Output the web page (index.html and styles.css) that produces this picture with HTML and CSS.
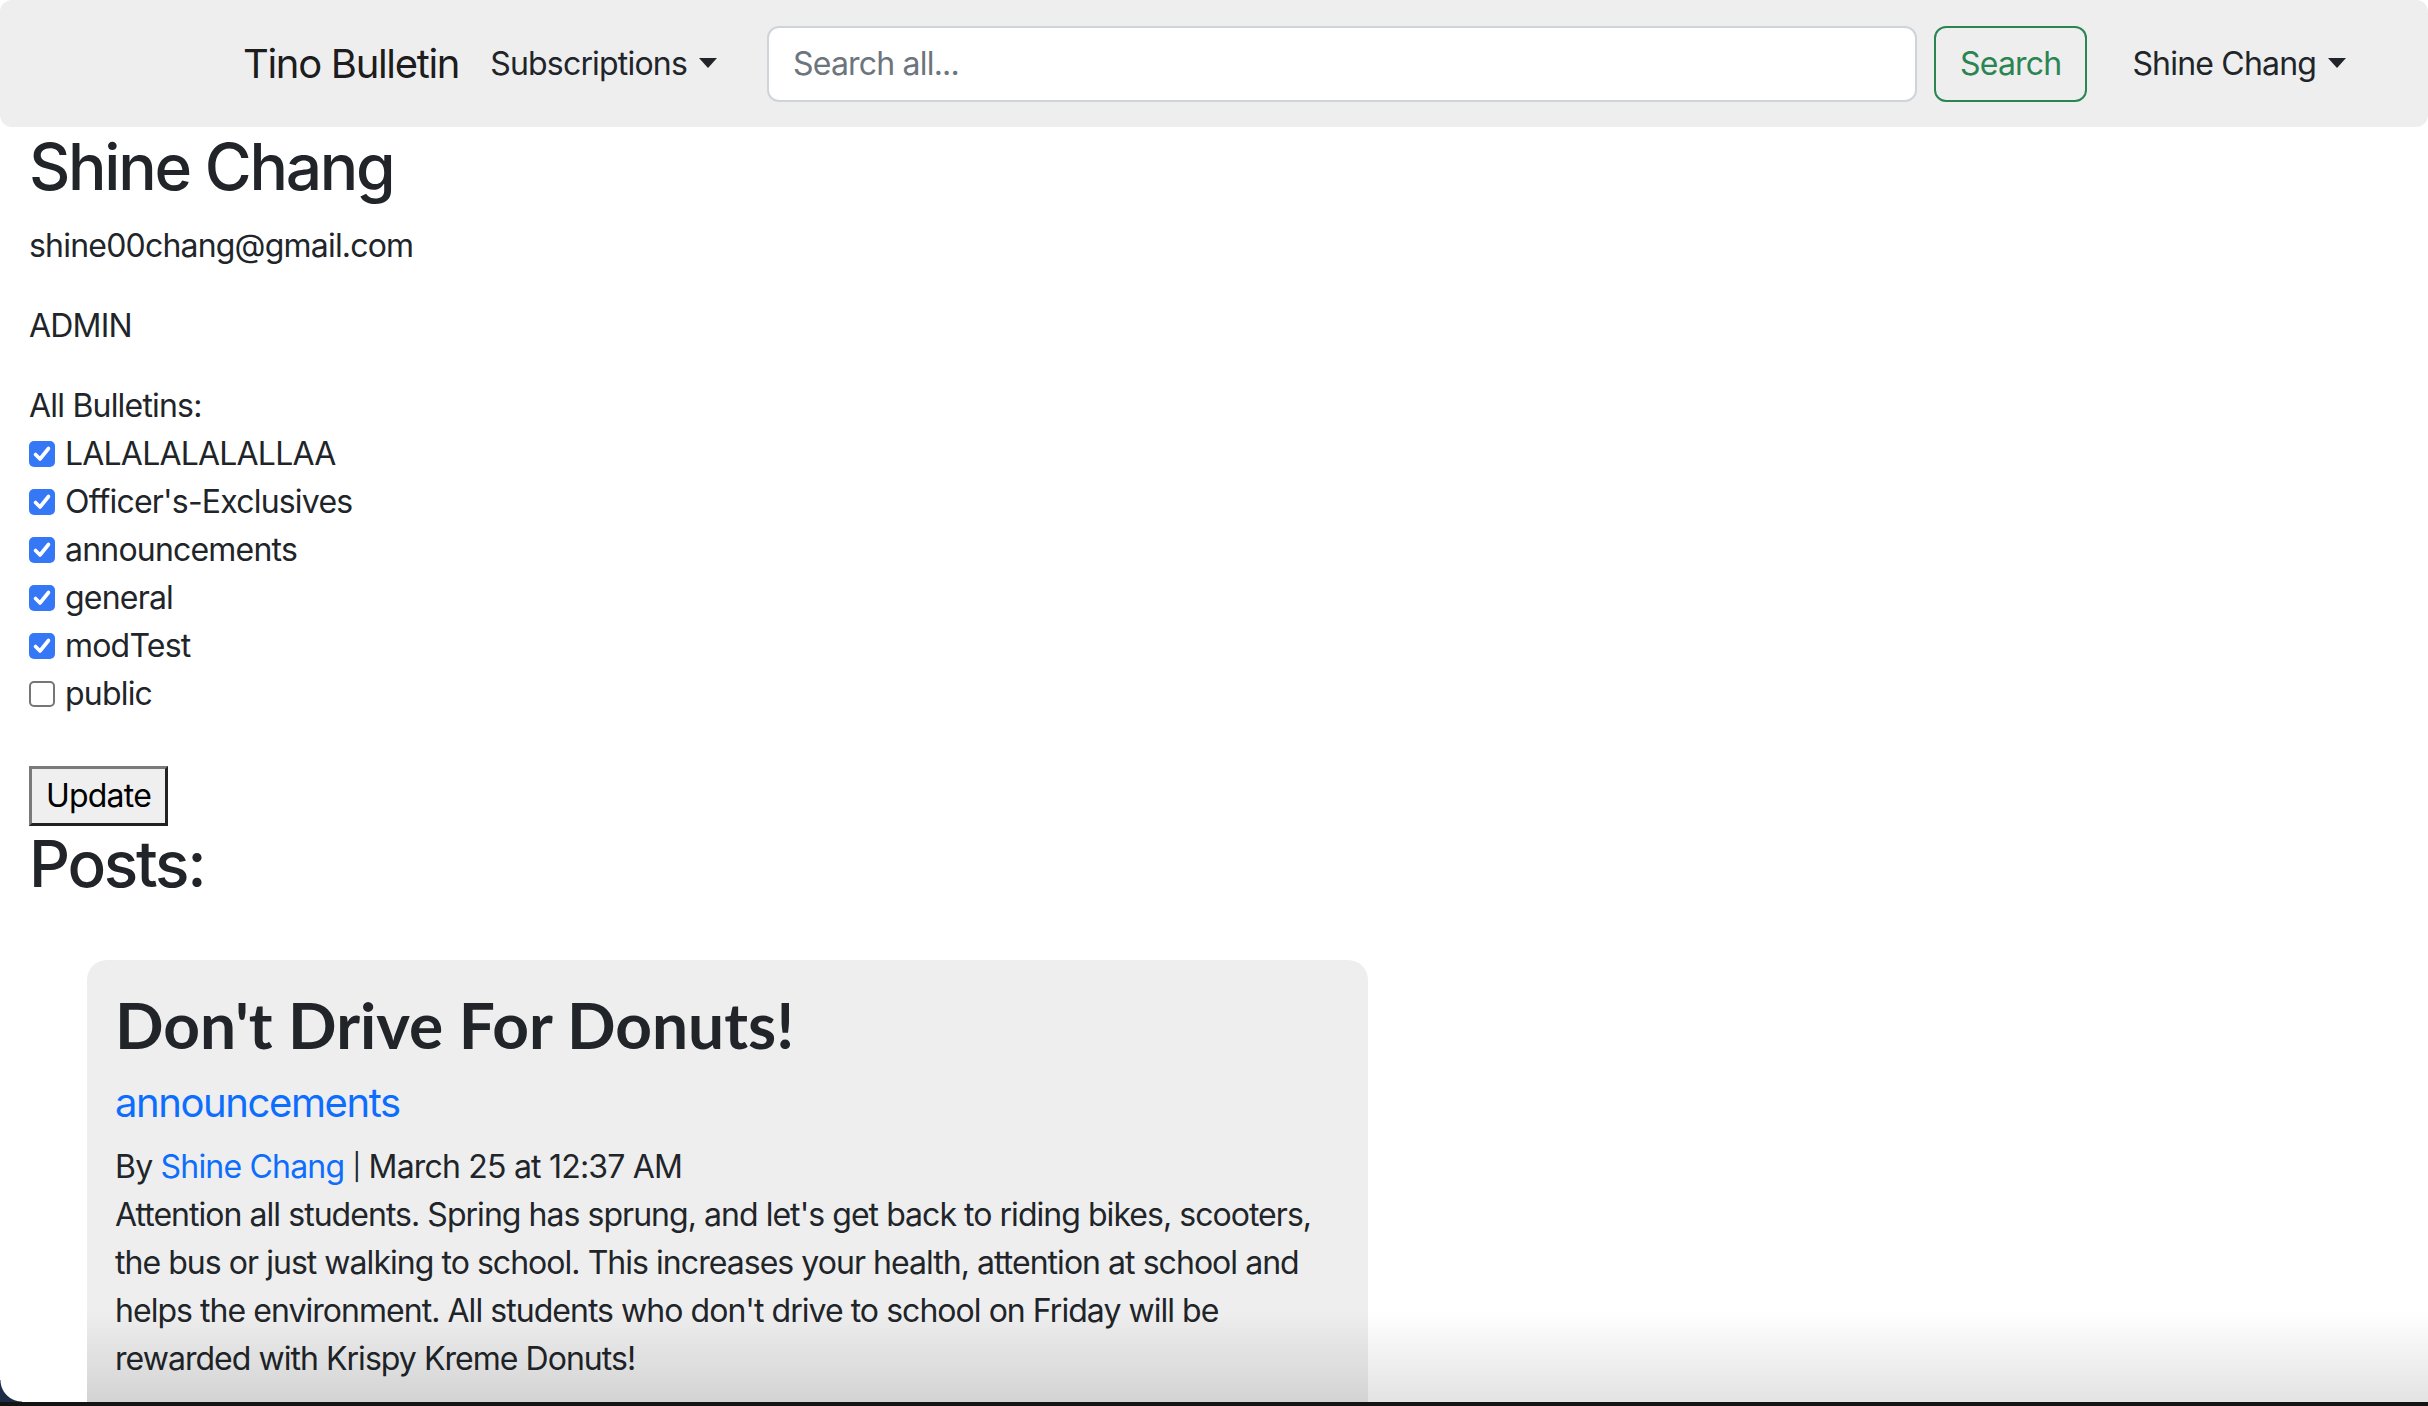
FILE: index.html
```html
<!DOCTYPE html>
<html lang="en">
<head>
<meta charset="utf-8">
<title>Tino Bulletin</title>
<link rel="stylesheet" href="styles.css">
</head>
<body>
<nav class="navbar">
  <div class="nav-left">
    <a class="brand" href="#">Tino Bulletin</a>
    <a class="nav-link dropdown-toggle" href="#">Subscriptions</a>
  </div>
  <form class="search">
    <input class="search-input" type="search" placeholder="Search all...">
    <button class="btn-search" type="button">Search</button>
  </form>
  <a class="nav-link dropdown-toggle user" href="#">Shine Chang</a>
</nav>
<main class="content">
  <h2 class="heading">Shine Chang</h2>
  <p class="para">shine00chang@gmail.com</p>
  <p class="para">ADMIN</p>
  <form class="subs">
    <div class="line">All Bulletins:</div>
    <label class="check"><span class="box on"><svg viewBox="0 0 26 26" width="26" height="26"><path d="M6.5 13.5 L11 18 L19.5 7.5" fill="none" stroke="#fff" stroke-width="3.6" stroke-linecap="round" stroke-linejoin="round"/></svg></span>LALALALALALLAA</label>
    <label class="check"><span class="box on"><svg viewBox="0 0 26 26" width="26" height="26"><path d="M6.5 13.5 L11 18 L19.5 7.5" fill="none" stroke="#fff" stroke-width="3.6" stroke-linecap="round" stroke-linejoin="round"/></svg></span>Officer's-Exclusives</label>
    <label class="check"><span class="box on"><svg viewBox="0 0 26 26" width="26" height="26"><path d="M6.5 13.5 L11 18 L19.5 7.5" fill="none" stroke="#fff" stroke-width="3.6" stroke-linecap="round" stroke-linejoin="round"/></svg></span>announcements</label>
    <label class="check"><span class="box on"><svg viewBox="0 0 26 26" width="26" height="26"><path d="M6.5 13.5 L11 18 L19.5 7.5" fill="none" stroke="#fff" stroke-width="3.6" stroke-linecap="round" stroke-linejoin="round"/></svg></span>general</label>
    <label class="check"><span class="box on"><svg viewBox="0 0 26 26" width="26" height="26"><path d="M6.5 13.5 L11 18 L19.5 7.5" fill="none" stroke="#fff" stroke-width="3.6" stroke-linecap="round" stroke-linejoin="round"/></svg></span>modTest</label>
    <label class="check"><span class="box"></span>public</label>
    <div class="line blank"></div>
    <button class="update" type="button">Update</button>
  </form>
  <h2 class="heading">Posts:</h2>
  <article class="post">
    <h2 class="post-title">Don't Drive For Donuts!</h2>
    <a class="post-cat" href="#">announcements</a>
    <div class="post-meta">By <a class="author" href="#">Shine Chang</a> <span class="sep">|</span> March 25 at 12:37 AM</div>
    <p class="post-body">Attention all students. Spring has sprung, and let's get back to riding bikes, scooters, the bus or just walking to school. This increases your health, attention at school and helps the environment. All students who don't drive to school on Friday will be rewarded with Krispy Kreme Donuts!</p>
  </article>
</main>
<div class="shade"></div>
<div class="window-edge"></div>
<div class="window-corner"></div>
</body>
</html>
```

FILE: styles.css
```css
html, body {
  margin: 0;
  padding: 0;
  background: #fff;
}

body {
  font-family: Inter, "Noto Sans", sans-serif;
  font-size: 32px;
  line-height: 1.5;
  letter-spacing: -0.025em;
  color: #212529;
}

.navbar {
  display: flex;
  align-items: center;
  height: 127px;
  padding-left: 243px;
  background: #eeeeee;
  border-radius: 12px;
}

.nav-left {
  display: flex;
  align-items: center;
  width: 524px;
  flex-shrink: 0;
}

.brand {
  font-size: 40px;
  line-height: 1.5;
  letter-spacing: -0.033em;
  color: rgba(0, 0, 0, 0.9);
  text-decoration: none;
  margin-right: 31px;
}

.nav-link {
  font-size: 32px;
  color: #212529;
  text-decoration: none;
  white-space: nowrap;
}

.dropdown-toggle::after {
  content: "";
  display: inline-block;
  margin-left: 12px;
  vertical-align: 7px;
  border-top: 10px solid;
  border-right: 9px solid transparent;
  border-left: 9px solid transparent;
}

.search {
  display: flex;
  align-items: center;
  gap: 17px;
  margin: 0;
}

.search-input {
  box-sizing: border-box;
  width: 1150px;
  height: 76px;
  padding: 12px 24px;
  border: 2px solid #ced4da;
  border-radius: 12px;
  background: #fff;
  font-family: inherit;
  font-size: 32px;
  letter-spacing: -0.025em;
  color: #212529;
  outline: none;
}

.search-input::placeholder {
  color: #6c757d;
}

.btn-search {
  box-sizing: border-box;
  height: 76px;
  padding: 12px 24px;
  border: 2px solid #2a8552;
  border-radius: 12px;
  background: transparent;
  color: #2a8552;
  font-family: inherit;
  font-size: 32px;
  letter-spacing: -0.025em;
  line-height: 1.5;
}

.user {
  margin-left: 45px;
}

.content {
  padding: 2px 0 0 29px;
}

.heading {
  font-size: 64px;
  font-weight: 500;
  line-height: 1.2;
  letter-spacing: -0.035em;
  margin: 0 0 16px;
  color: #212529;
}

.para {
  margin: 0 0 32px;
}

.subs {
  margin: 0;
}

.line {
  height: 48px;
}

.check {
  display: flex;
  align-items: center;
  height: 48px;
}

.box {
  box-sizing: border-box;
  width: 26px;
  height: 26px;
  margin-right: 10px;
  border-radius: 5px;
  border: 2px solid #767676;
  background: #fff;
  flex-shrink: 0;
}

.box.on {
  border: none;
  background: #3478f6;
}

.box svg {
  display: block;
}

.update {
  display: block;
  box-sizing: border-box;
  height: 60px;
  padding: 0 14px;
  border: 3px solid;
  border-color: #7a7a7a #222 #222 #7a7a7a;
  background: #efefef;
  color: #000;
  font-family: inherit;
  font-size: 32px;
  letter-spacing: -0.025em;
  line-height: 1;
}

.post {
  box-sizing: border-box;
  width: 1281px;
  margin: 57px 0 0 58px;
  padding: 27px 28px 60px;
  background: #eeeeee;
  border-radius: 20px;
}

.post-title {
  font-family: Lato, Inter, sans-serif;
  font-weight: 700;
  font-size: 64px;
  line-height: 1.2;
  letter-spacing: 0;
  margin: 0 0 16px;
  color: #212529;
}

.post-cat {
  display: block;
  font-size: 40px;
  line-height: 1.2;
  letter-spacing: -0.035em;
  margin-bottom: 16px;
  color: #0d6efd;
  text-decoration: none;
}

.author {
  color: #0d6efd;
  text-decoration: none;
}

.sep {
  font-size: 26px;
  vertical-align: 2px;
}

.post-body {
  margin: 0;
  letter-spacing: -0.03em;
}

.shade {
  position: fixed;
  left: 87px;
  right: 0;
  bottom: 4px;
  height: 90px;
  background: linear-gradient(to bottom, rgba(0, 0, 0, 0), rgba(0, 0, 0, 0.11));
  pointer-events: none;
}

.window-edge {
  position: fixed;
  left: 0;
  right: 0;
  bottom: 0;
  height: 4px;
  background: #141414;
  pointer-events: none;
}

.window-corner {
  position: fixed;
  left: 0;
  bottom: 4px;
  width: 22px;
  height: 22px;
  background: radial-gradient(circle at 100% 0, transparent 21px, #1d2d45 22px);
  pointer-events: none;
}
```
